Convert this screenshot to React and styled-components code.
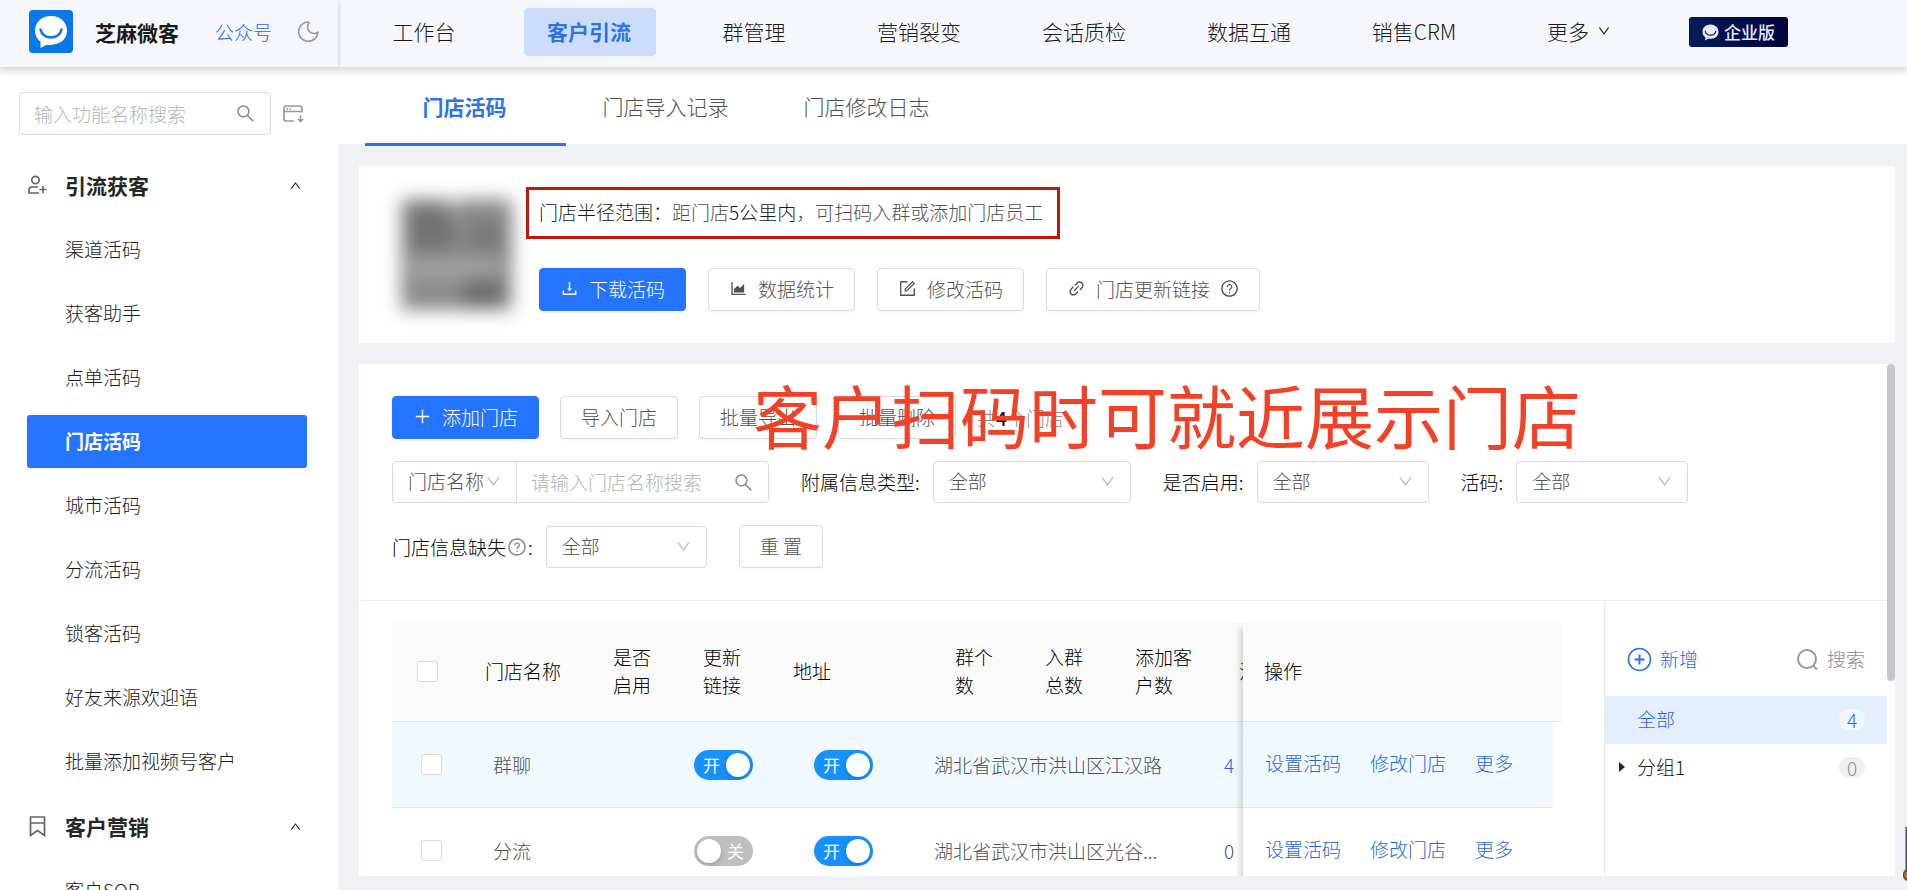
import React from "react";
import styled, { createGlobalStyle, css } from "styled-components";
import {
  AiOutlineAreaChart,
  AiOutlineDown,
  AiOutlineDownload,
  AiOutlineForm,
  AiOutlineLink,
  AiOutlinePlus,
  AiOutlineQuestionCircle,
  AiOutlineSearch,
  AiOutlineUp,
} from "react-icons/ai";

const GlobalStyle = createGlobalStyle`
  *, *::before, *::after { box-sizing: border-box; }
  body {
    margin: 0;
    background: #f0f1f5;
    color: #505050;
    font-family: "Noto Sans CJK SC", sans-serif;
    font-size: 19px;
    font-weight: 300;
    line-height: 28px;
  }
  button, input, select { font: inherit; color: inherit; }
  a { color: #1f68e0; text-decoration: none; }
  svg { flex: none; display: block; }
`;

const Shell = styled.div`
  display: flex;
  flex-direction: column;
  height: 100vh;
  overflow: hidden;
`;

const Header = styled.header`
  position: relative;
  z-index: 2;
  display: flex;
  flex: none;
  height: 67px;
  background: #f5f7fc;
  box-shadow: 0 2px 8px 2px rgba(0, 0, 0, 0.16);
`;

const Brand = styled.div`
  display: flex;
  align-items: center;
  width: 338px;
  padding: 0 19px 4px 29px;
  box-shadow: 2px 0 4px -1px rgba(0, 0, 0, 0.16);
`;

const BrandName = styled.strong`
  margin-left: 22px;
  color: #1a1a1a;
  font-size: 21px;
  font-weight: 700;
`;

const BrandLink = styled.a`
  margin: 0 26px 0 36px;
`;

const MainNav = styled.nav`
  display: flex;
  align-items: center;
  gap: 33px;
  padding: 0 0 3px 21px;
`;

const NavLink = styled.a`
  display: flex;
  align-items: center;
  justify-content: center;
  gap: 8px;
  width: 132px;
  height: 48px;
  padding: 0 2px 2px 0;
  border-radius: 4px;
  color: #1a1a1a;
  font-size: 21px;
  white-space: nowrap;
  ${(p) =>
    p.$active &&
    css`
      background: #cbddfb;
      color: #2c73e6;
      font-weight: 700;
    `}
`;

const EditionBadge = styled.span`
  display: flex;
  align-items: center;
  gap: 5px;
  height: 30px;
  margin: 17px 0 0 43px;
  padding: 0 13px;
  border-radius: 3px;
  background: linear-gradient(90deg, #001c58, #01023d);
  color: #e4e9fb;
  font-size: 17px;
  font-weight: 500;
`;

const Body = styled.div`
  display: flex;
  flex: 1;
  min-height: 0;
`;

const Sidebar = styled.aside`
  flex: none;
  width: 338px;
  padding: 25px 0 0;
  overflow: hidden;
  background: #fff;
`;

const SidebarSearch = styled.div`
  display: flex;
  align-items: center;
  gap: 12px;
  padding: 0 34px 0 19px;
  margin-bottom: 18px;
  color: #8c8c8c;
`;

const SearchField = styled.label`
  display: flex;
  flex: 1;
  align-items: center;
  min-width: 0;
  height: 43px;
  padding: 0 14px;
  border: 1px solid #d9d9d9;
  border-radius: 4px;
  color: #8c8c8c;
`;

const TextInput = styled.input`
  flex: 1;
  min-width: 0;
  padding: 0;
  border: 0;
  outline: 0;
  background: none;
  &::placeholder { color: #b5b5b5; opacity: 1; }
`;

const NavSection = styled.section`
  display: flex;
  flex-direction: column;
`;

const SectionToggle = styled.button`
  display: flex;
  align-items: center;
  gap: 17px;
  width: 100%;
  height: 64px;
  padding: 0 36px 0 27px;
  border: 0;
  background: none;
  color: #262626;
  font-size: 21px;
  font-weight: 700;
  text-align: left;
  span { flex: 1; }
`;

const SideLink = styled.a`
  display: flex;
  align-items: center;
  height: 53px;
  padding: 0 0 2px 38px;
  border-radius: 3px;
  color: #1a1a1a;
  ${(p) =>
    p.$active &&
    css`
      background: #2574ff;
      color: #fff;
      font-weight: 700;
    `}
`;

const SideList = styled.div`
  display: flex;
  flex-direction: column;
  gap: 11px;
  padding: 6px 31px 6px 27px;
`;

const Main = styled.main`
  display: flex;
  flex: 1;
  flex-direction: column;
  min-width: 0;
`;

const Tabs = styled.nav`
  display: flex;
  flex: none;
  height: 77px;
  padding-left: 27px;
  background: #fff;
`;

const Tab = styled.a`
  width: 201px;
  height: 79px;
  padding: 25px 2px 0 0;
  border-bottom: 3px solid ${(p) => (p.$active ? "#2c73e6" : "transparent")};
  color: ${(p) => (p.$active ? "#2c73e6" : "#505050")};
  font-size: 21px;
  font-weight: ${(p) => (p.$active ? 700 : 300)};
  text-align: center;
`;

const Content = styled.div`
  display: flex;
  flex: 1;
  flex-direction: column;
  gap: 21px;
  min-height: 0;
  padding: 22px 12px 14px 21px;
`;

const CodeCard = styled.section`
  display: flex;
  flex: none;
  gap: 14px;
  padding: 21px 33px 32px 42px;
  background: #fff;
`;

const CodeImage = styled.svg`
  width: 111px;
  height: 111px;
  margin-top: 12px;
  overflow: visible;
  filter: blur(9px);
`;

const CodeInfo = styled.div`
  display: flex;
  flex-direction: column;
  align-items: flex-start;
  gap: 29px;
`;

const RangeNote = styled.p`
  margin: 0;
  padding: 8px 14px 10px 10px;
  border: 3px solid #c0170b;
  line-height: 28px;
  b { color: #1a1a1a; font-weight: 300; }
`;

const ButtonRow = styled.div`
  display: flex;
  gap: ${(p) => (p.$inset ? "22px" : "21px")};
  align-items: center;
  padding-left: ${(p) => (p.$inset ? "13px" : "0")};
`;

const Button = styled.button`
  display: flex;
  align-items: center;
  gap: 10px;
  height: 43px;
  padding: 0 20px 2px;
  border: 1px solid ${(p) => (p.$primary ? "#2574ff" : "#d9d9d9")};
  border-radius: 4px;
  background: ${(p) => (p.$primary ? "#2574ff" : "#fff")};
  color: ${(p) => (p.$primary ? "#fff" : "#505050")};
  box-shadow: 0 2px 0 rgba(0, 0, 0, 0.02);
  white-space: nowrap;
`;

const StoreCard = styled.section`
  position: relative;
  display: flex;
  flex: 1;
  flex-direction: column;
  min-height: 0;
  padding-right: 8px;
  overflow: hidden;
  background: #fff;
`;

const ScrollThumb = styled.div`
  position: absolute;
  top: 0;
  right: 0;
  width: 8px;
  height: 62%;
  border-radius: 4px;
  background: #c6c6c6;
`;

const Caption = styled.div`
  position: absolute;
  top: 10px;
  left: 394px;
  color: #f24127;
  font-size: 69px;
  font-weight: 400;
  line-height: 80px;
  white-space: nowrap;
  pointer-events: none;
`;

const Controls = styled.div`
  flex: none;
  padding: 32px 33px;
  border-bottom: 1px solid #ebebeb;
`;

const Total = styled.span`
  color: #8c8c8c;
  b { color: #1a1a1a; font-weight: 500; }
`;

const Filters = styled.form`
  display: flex;
  flex-wrap: wrap;
  gap: 22px 32px;
  margin-top: 22px;
`;

const FilterItem = styled.div`
  display: flex;
  align-items: center;
  gap: 13px;
  color: #000;
`;

const FilterLabel = styled.label`
  display: flex;
  align-items: center;
  gap: 1px;
  svg { color: #8c8c8c; }
`;

const SelectBox = styled.div`
  position: relative;
  width: ${(p) => p.$width}px;
  select {
    width: 100%;
    height: 42px;
    padding: 0 15px 2px;
    border: 1px solid #d9d9d9;
    border-radius: 4px;
    background: #fff;
    color: #505050;
    appearance: none;
  }
  svg {
    position: absolute;
    top: 12px;
    right: 15px;
    color: #bfbfbf;
    pointer-events: none;
  }
`;

const SearchGroup = styled.div`
  display: flex;
  width: 377px;
  ${SelectBox} select { border-radius: 4px 0 0 4px; }
  ${SearchField} {
    height: 42px;
    margin-left: -1px;
    border-radius: 0 4px 4px 0;
  }
`;

const Split = styled.div`
  display: flex;
  flex: 1;
  min-height: 0;
`;

const TableArea = styled.div`
  display: flex;
  flex: 1;
  align-items: flex-start;
  min-width: 0;
  padding: 22px 43px 0 33px;
`;

const ScrollPane = styled.div`
  flex: 1;
  min-width: 0;
  overflow: hidden;
`;

const FixedPane = styled.div`
  flex: none;
  width: 318px;
  padding-bottom: 40px;
  background: #fff;
  box-shadow: -4px 4px 6px -1px rgba(0, 0, 0, 0.16);
`;

const Table = styled.table`
  width: ${(p) => p.$width}px;
  table-layout: fixed;
  border-collapse: separate;
  border-spacing: 0;
`;

const HeadCell = styled.th`
  height: 99px;
  padding: 0 18px 2px ${(p) => p.$pad || 16}px;
  border-bottom: 1px solid #e4e7ea;
  background: #fafafa;
  color: #000;
  font-weight: 300;
  text-align: left;
`;

const Cell = styled.td`
  height: 86px;
  padding: 0 0 0 ${(p) => p.$pad || 21}px;
  border-bottom: 1px solid #e4e7ea;
  background: ${(p) => (p.$hover ? "#f0f9ff" : "#fff")};
  white-space: nowrap;
`;

const Checkbox = styled.input.attrs({ type: "checkbox" })`
  display: block;
  width: 21px;
  height: 21px;
  margin: 0;
  border: 1px solid #d9d9d9;
  border-radius: 3px;
  background: #fff;
  appearance: none;
`;

const SwitchTrack = styled.label`
  display: flex;
  align-items: center;
  flex-direction: ${(p) => (p.$on ? "row" : "row-reverse")};
  justify-content: space-between;
  width: 59px;
  height: 30px;
  padding: ${(p) => (p.$on ? "0 3px 0 9px" : "0 9px 0 3px")};
  border-radius: 15px;
  background: ${(p) => (p.$on ? "#1890ff" : "#bfbfbf")};
  color: #fff;
  font-size: 17px;
  font-weight: 400;
  line-height: 28px;
  input {
    width: 24px;
    height: 24px;
    margin: 0;
    border-radius: 12px;
    background: #fff;
    box-shadow: 0 2px 4px rgba(0, 35, 11, 0.2);
    appearance: none;
  }
`;

const Actions = styled.div`
  display: flex;
  gap: 29px;
  padding-bottom: 3px;
`;

const GroupPanel = styled.aside`
  flex: none;
  width: 283px;
  border-left: 1px solid #ebebeb;
`;

const GroupTools = styled.div`
  display: flex;
  justify-content: space-between;
  padding: 44px 22px 23px;
`;

const PlainButton = styled.button`
  display: flex;
  align-items: center;
  gap: 8px;
  padding: 0;
  border: 0;
  background: none;
  color: ${(p) => (p.$accent ? "#1f68e0" : "#8c8c8c")};
`;

const GroupRow = styled.a`
  display: flex;
  align-items: center;
  height: 48px;
  padding: 0 22px 2px 14px;
  background: ${(p) => (p.$active ? "#e4eefe" : "#fff")};
  color: ${(p) => (p.$active ? "#1f68e0" : "#1a1a1a")};
  svg { width: 6px; margin-right: 12px; }
`;

const GroupName = styled.span`
  flex: 1;
  padding-left: ${(p) => (p.$bare ? "18px" : "0")};
`;

const Count = styled.span`
  width: 26px;
  height: 21px;
  border-radius: 10px;
  background: ${(p) => (p.$active ? "#f2f7ff" : "#f0f0f0")};
  color: ${(p) => (p.$active ? "#1f68e0" : "#8c8c8c")};
  line-height: 21px;
  text-align: center;
`;

const Helper = styled.svg`
  position: absolute;
  right: 0;
  bottom: 9px;
  z-index: 3;
`;

function Bubble({ size, face, smile }) {
  return (
    <svg width={size} height={size} viewBox="0 0 34 34" aria-hidden="true">
      <path d="M17 1C8 1 1 7 1 15.500c0 5.500 2.500 9 5.500 11V33l6-3.300C25 31 33 25 33 15.500 33 7 26 1 17 1z" fill={face} />
      <path d="M6.500 14.500C8.500 25 25.500 25 27.500 14.500" fill="none" stroke={smile} strokeWidth="2.500" strokeLinecap="round" />
    </svg>
  );
}

const LogoTile = styled.span`
  display: grid;
  place-items: center;
  width: 44px;
  height: 43px;
  border-radius: 4px;
  background: #0877e8;
`;

function MoonIcon() {
  return (
    <svg width="21" height="21" viewBox="0 0 20 20" fill="none" stroke="#999" strokeWidth="1.500" aria-hidden="true">
      <path d="M9 1A9.200 9.200 0 1 0 19 10.500C14 14.500 6 9 10.500 1.500z" strokeLinejoin="round" />
    </svg>
  );
}

function PanelIcon() {
  return (
    <svg width="21" height="18" viewBox="0 0 21 18" fill="none" stroke="#999" strokeWidth="1.700" aria-hidden="true">
      <path d="M11 16H3a2 2 0 0 1-2-2V3a2 2 0 0 1 2-2h14a2 2 0 0 1 2 2v4.500M1 6.500h18M3.500 3.800h1.500M6.500 3.800H8M17.500 10.500v6M15 14l2.500 2.500 2.500-2.500" />
    </svg>
  );
}

function UserPlusIcon() {
  return (
    <svg width="21" height="20" viewBox="0 0 21 20" fill="none" stroke="#666" strokeWidth="1.700" aria-hidden="true">
      <circle cx="8.500" cy="5" r="3.700" />
      <path d="M12 18H2v-3a3 3 0 0 1 3-3h6M16 11v7M12.500 14.500h7" />
    </svg>
  );
}

function BookmarkIcon() {
  return (
    <svg width="21" height="21" viewBox="0 0 21 21" fill="none" stroke="#666" strokeWidth="1.700" aria-hidden="true">
      <path d="M3.500 1h14v18.500l-7-5-7 5zM3.500 7h14" />
    </svg>
  );
}

function RoundPlusIcon() {
  return (
    <svg width="25" height="25" viewBox="0 0 25 25" fill="none" stroke="#2c73e6" strokeWidth="1.600" aria-hidden="true">
      <circle cx="12.500" cy="12.500" r="11" />
      <path d="M12.500 7.500v10M7.500 12.500h10" strokeWidth="2" />
    </svg>
  );
}

function LensIcon() {
  return (
    <svg width="23" height="23" viewBox="0 0 23 23" fill="none" stroke="#999" strokeWidth="2" aria-hidden="true">
      <circle cx="11" cy="11" r="9" />
      <path d="M17 17.500l4 4" />
    </svg>
  );
}

function Switch({ on, label }) {
  return (
    <SwitchTrack $on={on}>
      <span>{on ? "开" : "关"}</span>
      <input type="checkbox" role="switch" defaultChecked={on} aria-label={label} />
    </SwitchTrack>
  );
}

function Select({ id, width, label, value = "全部" }) {
  return (
    <SelectBox $width={width}>
      <select id={id} aria-label={label}>
        <option>{value}</option>
      </select>
      <AiOutlineDown size={17} />
    </SelectBox>
  );
}

const navItems = ["工作台", "客户引流", "群管理", "营销裂变", "会话质检", "数据互通", "销售CRM"];
const leadLinks = ["渠道活码", "获客助手", "点单活码", "门店活码", "城市活码", "分流活码", "锁客活码", "好友来源欢迎语", "批量添加视频号客户"];
const headColumns = [
  ["门店名称", 128],
  ["是否启用", 90],
  ["更新链接", 90],
  ["地址", 162],
  ["群个数", 90],
  ["入群总数", 90],
  ["添加客户数", 104],
  ["活码", 90],
];
const bodyWidths = [80, 201, 120, 120, 290, 110];
const stores = [
  { name: "群聊", link: true, located: true, address: "湖北省武汉市洪山区江汉路", groups: 4, hover: true },
  { name: "分流", link: false, located: true, address: "湖北省武汉市洪山区光谷...", groups: 0 },
];

function SideSection({ icon, title, links, active }) {
  return (
    <NavSection>
      <SectionToggle type="button">
        {icon}
        <span>{title}</span>
        <AiOutlineUp size={13} />
      </SectionToggle>
      <SideList>
        {links.map((text) => (
          <SideLink key={text} href="#" $active={text === active}>
            {text}
          </SideLink>
        ))}
      </SideList>
    </NavSection>
  );
}

function StoreTable() {
  return (
    <TableArea>
      <ScrollPane>
        <Table $width={921}>
          <colgroup>
            <col width={77} />
            {headColumns.map(([text, width]) => (
              <col key={text} width={width} />
            ))}
          </colgroup>
          <thead>
            <tr>
              <HeadCell $pad={25}>
                <Checkbox aria-label="全选" />
              </HeadCell>
              {headColumns.map(([text]) => (
                <HeadCell key={text}>{text}</HeadCell>
              ))}
            </tr>
          </thead>
        </Table>
        <Table $width={921}>
          <colgroup>
            {bodyWidths.map((width, i) => (
              <col key={i} width={width} />
            ))}
          </colgroup>
          <tbody>
            {stores.map((s) => (
              <tr key={s.name}>
                <Cell $hover={s.hover} $pad={29}>
                  <Checkbox aria-label={s.name} />
                </Cell>
                <Cell $hover={s.hover}>{s.name}</Cell>
                <Cell $hover={s.hover}>
                  <Switch on={s.link} label="更新链接" />
                </Cell>
                <Cell $hover={s.hover}>
                  <Switch on={s.located} label="是否启用" />
                </Cell>
                <Cell $hover={s.hover}>{s.address}</Cell>
                <Cell $hover={s.hover}>{s.groups ? <a href="#">{s.groups}</a> : s.groups}</Cell>
              </tr>
            ))}
          </tbody>
        </Table>
      </ScrollPane>
      <FixedPane>
        <Table $width={318}>
          <thead>
            <tr>
              <HeadCell $pad={21}>操作</HeadCell>
            </tr>
          </thead>
        </Table>
        <Table $width={310}>
          <tbody>
            {stores.map((s) => (
              <tr key={s.name}>
                <Cell $hover={s.hover} $pad={22}>
                  <Actions>
                    <a href="#">设置活码</a>
                    <a href="#">修改门店</a>
                    <a href="#">更多</a>
                  </Actions>
                </Cell>
              </tr>
            ))}
          </tbody>
        </Table>
      </FixedPane>
    </TableArea>
  );
}

export default function App() {
  return (
    <Shell>
      <GlobalStyle />
      <Header>
        <Brand>
          <LogoTile>
            <Bubble size={34} face="#fff" smile="#0877e8" />
          </LogoTile>
          <BrandName>芝麻微客</BrandName>
          <BrandLink href="#">公众号</BrandLink>
          <MoonIcon />
        </Brand>
        <MainNav>
          {navItems.map((text) => (
            <NavLink key={text} href="#" $active={text === "客户引流"}>
              {text}
            </NavLink>
          ))}
          <NavLink href="#">
            更多 <AiOutlineDown size={14} />
          </NavLink>
        </MainNav>
        <EditionBadge>
          <Bubble size={17} face="#e4e9fb" smile="#001c58" />
          企业版
        </EditionBadge>
      </Header>

      <Body>
        <Sidebar>
          <SidebarSearch>
            <SearchField>
              <TextInput placeholder="输入功能名称搜索" aria-label="输入功能名称搜索" />
              <AiOutlineSearch size={21} />
            </SearchField>
            <PanelIcon />
          </SidebarSearch>
          <SideSection icon={<UserPlusIcon />} title="引流获客" links={leadLinks} active="门店活码" />
          <SideSection icon={<BookmarkIcon />} title="客户营销" links={["客户SOP"]} />
        </Sidebar>

        <Main>
          <Tabs>
            <Tab href="#" $active>门店活码</Tab>
            <Tab href="#">门店导入记录</Tab>
            <Tab href="#">门店修改日志</Tab>
          </Tabs>
          <Content>
            <CodeCard>
              <CodeImage viewBox="0 0 111 111" role="img" aria-label="门店活码">
                <rect width="111" height="111" rx="4" fill="#8a8a8a" />
                <rect x="8" y="6" width="44" height="46" fill="#727272" />
                <rect x="66" y="22" width="40" height="32" fill="#7a7a7a" />
                <rect x="8" y="58" width="90" height="22" fill="#a2a2a2" />
                <rect x="64" y="80" width="38" height="26" fill="#6a6a6a" />
                <rect x="44" y="0" width="16" height="14" fill="#aaa" />
              </CodeImage>
              <CodeInfo>
                <RangeNote>
                  <b>门店半径范围：</b>距门店<b>5公里内</b>，可扫码入群或添加门店员工
                </RangeNote>
                <ButtonRow $inset>
                  <Button type="button" $primary><AiOutlineDownload size={19} />下载活码</Button>
                  <Button type="button"><AiOutlineAreaChart size={19} />数据统计</Button>
                  <Button type="button"><AiOutlineForm size={19} />修改活码</Button>
                  <Button type="button"><AiOutlineLink size={19} />门店更新链接<AiOutlineQuestionCircle size={19} /></Button>
                </ButtonRow>
              </CodeInfo>
            </CodeCard>

            <StoreCard>
              <Controls>
                <ButtonRow>
                  <Button type="button" $primary><AiOutlinePlus size={19} />添加门店</Button>
                  <Button type="button">导入门店</Button>
                  <Button type="button">批量导出</Button>
                  <Button type="button">批量删除</Button>
                  <Total>共<b>4</b>个门店</Total>
                </ButtonRow>
                <Filters>
                  <SearchGroup>
                    <Select width={125} label="搜索字段" value="门店名称" />
                    <SearchField>
                      <TextInput placeholder="请输入门店名称搜索" aria-label="请输入门店名称搜索" />
                      <AiOutlineSearch size={21} />
                    </SearchField>
                  </SearchGroup>
                  <FilterItem>
                    <FilterLabel htmlFor="extra">附属信息类型:</FilterLabel>
                    <Select id="extra" width={198} />
                  </FilterItem>
                  <FilterItem>
                    <FilterLabel htmlFor="enabled">是否启用:</FilterLabel>
                    <Select id="enabled" width={172} />
                  </FilterItem>
                  <FilterItem>
                    <FilterLabel htmlFor="code">活码:</FilterLabel>
                    <Select id="code" width={172} />
                  </FilterItem>
                  <FilterItem>
                    <FilterLabel htmlFor="missing">门店信息缺失<AiOutlineQuestionCircle size={20} />:</FilterLabel>
                    <Select id="missing" width={161} />
                  </FilterItem>
                  <Button type="reset">重 置</Button>
                </Filters>
              </Controls>
              <Split>
                <StoreTable />
                <GroupPanel>
                  <GroupTools>
                    <PlainButton type="button" $accent><RoundPlusIcon />新增</PlainButton>
                    <PlainButton type="button"><LensIcon />搜索</PlainButton>
                  </GroupTools>
                  <GroupRow href="#" $active>
                    <GroupName $bare>全部</GroupName>
                    <Count $active>4</Count>
                  </GroupRow>
                  <GroupRow href="#">
                    <svg height="10" viewBox="0 0 6 10" aria-hidden="true"><path d="M0 0l6 5-6 5z" fill="#262626" /></svg>
                    <GroupName>分组1</GroupName>
                    <Count>0</Count>
                  </GroupRow>
                </GroupPanel>
              </Split>
              <Caption>客户扫码时可就近展示门店</Caption>
              <ScrollThumb />
            </StoreCard>
          </Content>
        </Main>
      </Body>
      <Helper width="4" height="54" viewBox="0 0 4 54" aria-hidden="true">
        <path d="M2.500 0H4v44H2.500z" fill="#43505a" />
        <circle cx="6" cy="48" r="5.500" fill="#b5762f" stroke="#43505a" strokeWidth="1.500" />
      </Helper>
    </Shell>
  );
}
